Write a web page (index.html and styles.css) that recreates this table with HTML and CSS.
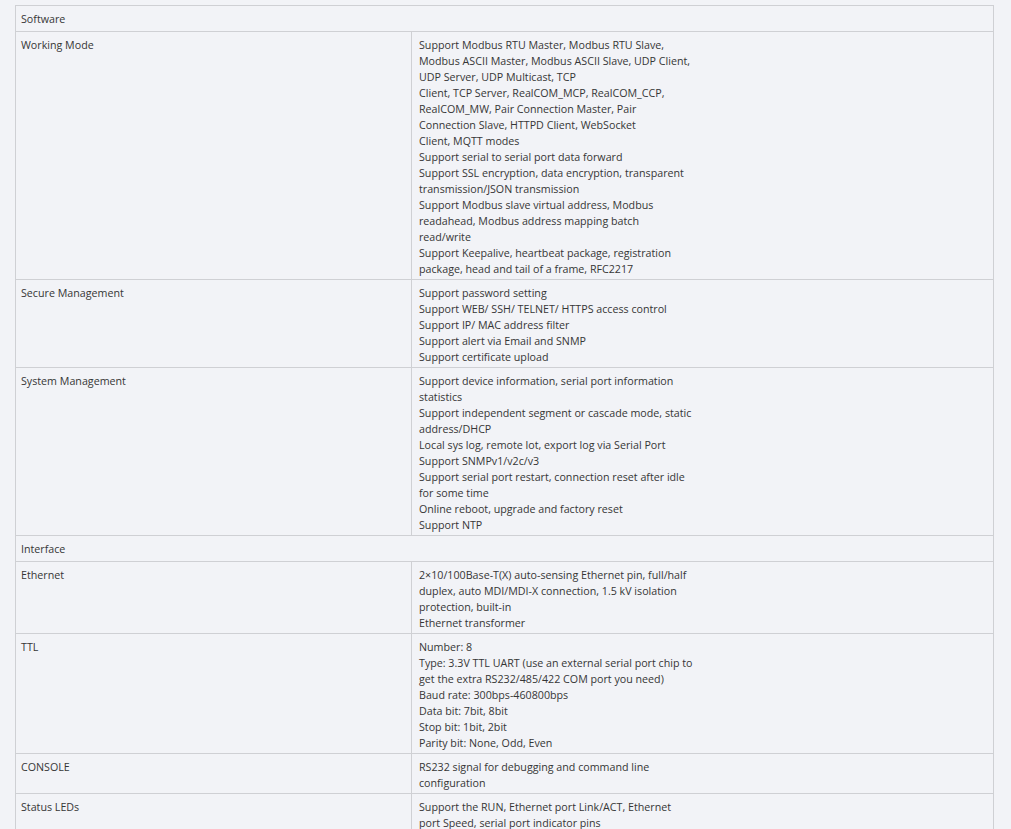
FILE: index.html
```html
<!DOCTYPE html>
<html lang="en">
  <head>
    <meta charset="utf-8">
    <title>Specifications</title>
    <link rel="stylesheet" href="styles.css">
  </head>
  <body>
    <table class="specTable">
      <colgroup>
        <col class="nameCol">
        <col class="valueCol">
      </colgroup>
      <tr class="groupRow">
        <td colspan="2">Software</td>
      </tr>
      <tr>
        <td class="specName">Working Mode</td>
        <td class="specValue">Support Modbus RTU Master, Modbus RTU Slave,<br>
          Modbus ASCII Master, Modbus ASCII Slave, UDP Client,<br>
          UDP Server, UDP Multicast, TCP<br>
          Client, TCP Server, RealCOM_MCP, RealCOM_CCP,<br>
          RealCOM_MW, Pair Connection Master, Pair<br>
          Connection Slave, HTTPD Client, WebSocket<br>
          Client, MQTT modes<br>
          Support serial to serial port data forward<br>
          Support SSL encryption, data encryption, transparent<br>
          transmission/JSON transmission<br>
          Support Modbus slave virtual address, Modbus<br>
          readahead, Modbus address mapping batch<br>
          read/write<br>
          Support Keepalive, heartbeat package, registration<br>
          package, head and tail of a frame, RFC2217</td>
      </tr>
      <tr>
        <td class="specName">Secure Management</td>
        <td class="specValue">Support password setting<br>
          Support WEB/ SSH/ TELNET/ HTTPS access control<br>
          Support IP/ MAC address filter<br>
          Support alert via Email and SNMP<br>
          Support certificate upload</td>
      </tr>
      <tr>
        <td class="specName">System Management</td>
        <td class="specValue">Support device information, serial port information<br>
          statistics<br>
          Support independent segment or cascade mode, static<br>
          address/DHCP<br>
          Local sys log, remote lot, export log via Serial Port<br>
          Support SNMPv1/v2c/v3<br>
          Support serial port restart, connection reset after idle<br>
          for some time<br>
          Online reboot, upgrade and factory reset<br>
          Support NTP</td>
      </tr>
      <tr class="groupRow">
        <td colspan="2">Interface</td>
      </tr>
      <tr>
        <td class="specName">Ethernet</td>
        <td class="specValue">2×10/100Base-T(X) auto-sensing Ethernet pin, full/half<br>
          duplex, auto MDI/MDI-X connection, 1.5 kV isolation<br>
          protection, built-in<br>
          Ethernet transformer</td>
      </tr>
      <tr>
        <td class="specName">TTL</td>
        <td class="specValue">Number: 8<br>
          Type: 3.3V TTL UART (use an external serial port chip to<br>
          get the extra RS232/485/422 COM port you need)<br>
          Baud rate: 300bps-460800bps<br>
          Data bit: 7bit, 8bit<br>
          Stop bit: 1bit, 2bit<br>
          Parity bit: None, Odd, Even</td>
      </tr>
      <tr>
        <td class="specName">CONSOLE</td>
        <td class="specValue">RS232 signal for debugging and command line<br>
          configuration</td>
      </tr>
      <tr>
        <td class="specName">Status LEDs</td>
        <td class="specValue">Support the RUN, Ethernet port Link/ACT, Ethernet<br>
          port Speed, serial port indicator pins</td>
      </tr>
    </table>
  </body>
</html>
```

FILE: styles.css
```css
body {
  margin: 0;
  padding: 5px 0 0 15px;
  background-color: #f2f3f7;
  font-family: 'Open Sans', sans-serif;
  font-size: 10.7px;
  line-height: 16px;
  color: #363636;
}
.specTable {
  border-collapse: collapse;
  width: 979px;
  table-layout: fixed;
}
.nameCol {
  width: 396px;
}
.specTable td {
  border: 1px solid #cfd0d4;
  padding: 5px 5px 2px;
  vertical-align: top;
  white-space: nowrap;
}
.specTable .groupRow td {
  padding: 5px 5px 4px;
}
.specTable .specValue {
  padding-left: 7px;
}
```
